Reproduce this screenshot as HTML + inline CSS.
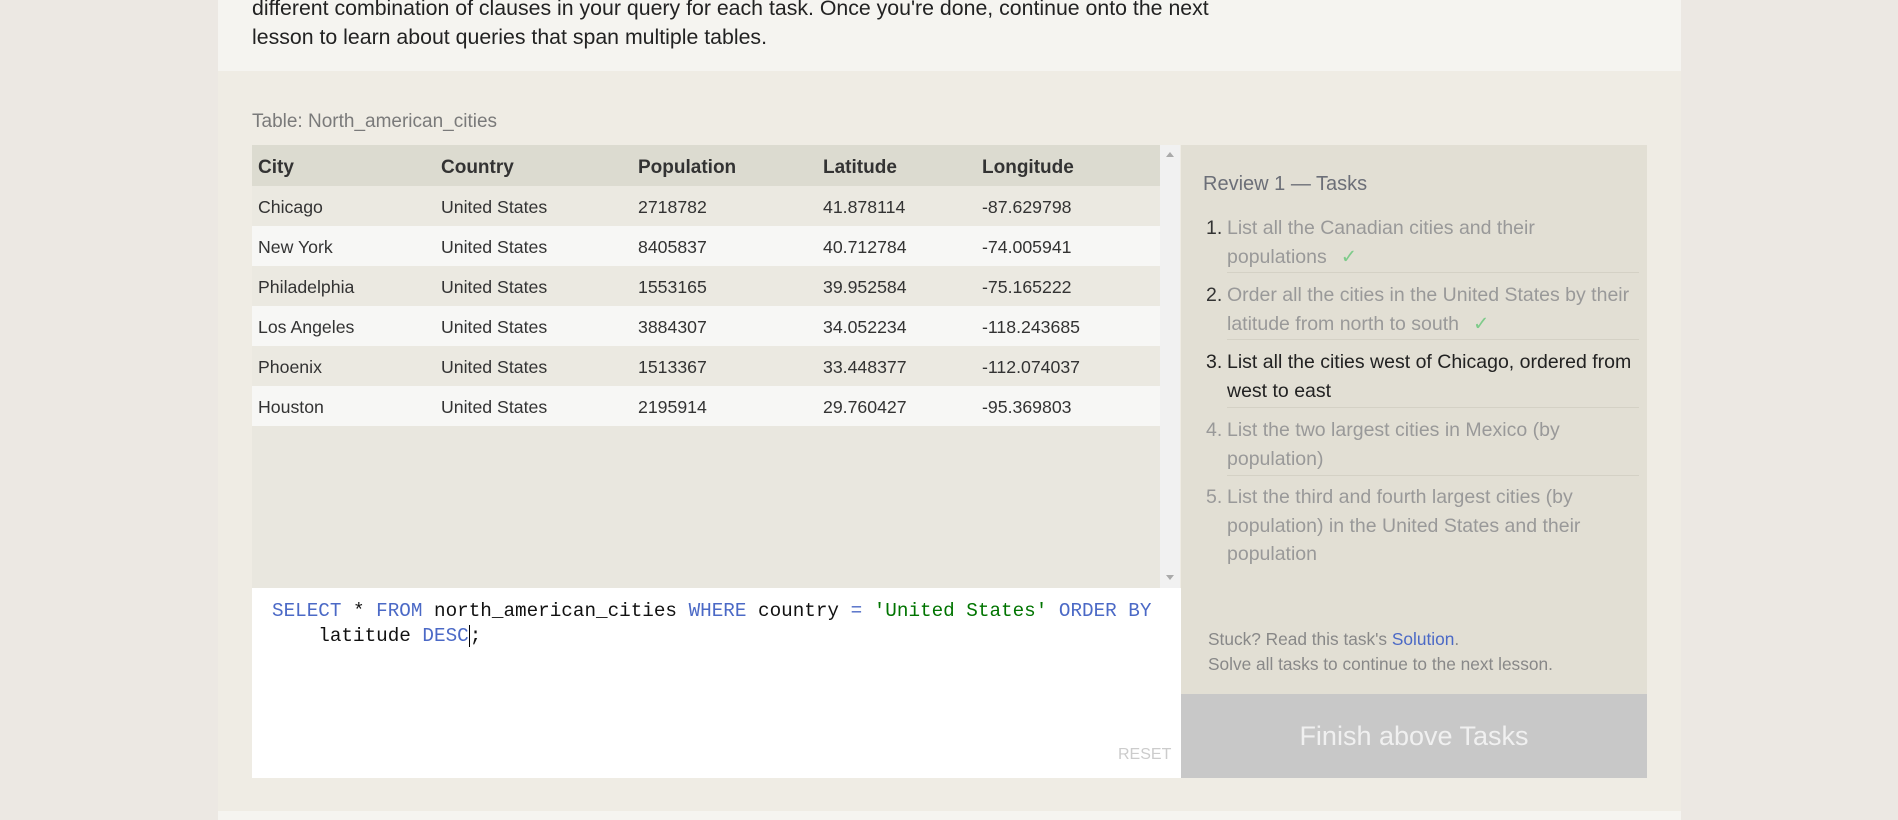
<!DOCTYPE html>
<html><head><meta charset="utf-8"><style>
*{margin:0;padding:0;box-sizing:border-box}
body{width:1898px;height:820px;overflow:hidden;background:#ece8e3;font-family:"Liberation Sans",sans-serif;position:relative}
.abs{position:absolute}
#top{left:218px;top:0;width:1463px;height:71px;background:#f5f4f0}
#top p{position:absolute;left:34px;font-size:21.3px;color:#222;white-space:nowrap}
#sec{left:218px;top:71px;width:1463px;height:740px;background:#efece4}
#bot{left:218px;top:811px;width:1463px;height:9px;background:#f5f4f0}
#cap{left:252px;top:111px;font-size:19px;color:#7a7a7a}
#tbl{left:252px;top:145px;width:908px;height:443px;background:#e9e7df}
.row{position:absolute;left:0;width:908px;height:40px;font-size:17.7px;color:#333}
.row span{position:absolute;top:11px}
.hd{background:#dcdbd0;height:41px;font-weight:bold;font-size:19px}
.hd span{top:12px}
.o{background:#ebe9e1}.e{background:#f7f7f5}
.c1{left:6px}.c2{left:189px}.c3{left:386px}.c4{left:571px}.c5{left:730px}
#sb{left:1160px;top:145px;width:20px;height:443px;background:#f1f1f1}
#ed{left:252px;top:588px;width:929px;height:190px;background:#fff;font-family:"Liberation Mono",monospace;font-size:19.3px;color:#111}
#ed div{position:absolute;white-space:pre;left:20px}
.k{color:#4b69c6}.s{color:#007400}
#rp{left:1181px;top:145px;width:466px;height:549px;background:#e2dfd4}
#btn{left:1181px;top:694px;width:466px;height:84px;background:#c8c8c8;color:#f0f0f0;font-size:27px;text-align:center;line-height:84px}
.t{position:absolute;left:46px;width:414px;font-size:19.5px;line-height:28.5px;color:#999}
.n{position:absolute;left:-21px}
.sep{position:absolute;left:46px;width:412px;height:1px;background:#d4d1c5}
.ck{color:#7ecb8a;margin-left:14px}
</style></head><body>
<div id="top" class="abs">
<p style="top:-4px">different combination of clauses in your query for each task. Once you're done, continue onto the next</p>
<p style="top:25px">lesson to learn about queries that span multiple tables.</p>
</div>
<div id="sec" class="abs"></div>
<div id="bot" class="abs"></div>
<div id="cap" class="abs">Table: North_american_cities</div>
<div id="tbl" class="abs">
<div class="row hd" style="top:0"><span class="c1">City</span><span class="c2">Country</span><span class="c3">Population</span><span class="c4">Latitude</span><span class="c5">Longitude</span></div>
<div class="row o" style="top:41px"><span class="c1">Chicago</span><span class="c2">United States</span><span class="c3">2718782</span><span class="c4">41.878114</span><span class="c5">-87.629798</span></div>
<div class="row e" style="top:81px"><span class="c1">New York</span><span class="c2">United States</span><span class="c3">8405837</span><span class="c4">40.712784</span><span class="c5">-74.005941</span></div>
<div class="row o" style="top:121px"><span class="c1">Philadelphia</span><span class="c2">United States</span><span class="c3">1553165</span><span class="c4">39.952584</span><span class="c5">-75.165222</span></div>
<div class="row e" style="top:161px"><span class="c1">Los Angeles</span><span class="c2">United States</span><span class="c3">3884307</span><span class="c4">34.052234</span><span class="c5">-118.243685</span></div>
<div class="row o" style="top:201px"><span class="c1">Phoenix</span><span class="c2">United States</span><span class="c3">1513367</span><span class="c4">33.448377</span><span class="c5">-112.074037</span></div>
<div class="row e" style="top:241px"><span class="c1">Houston</span><span class="c2">United States</span><span class="c3">2195914</span><span class="c4">29.760427</span><span class="c5">-95.369803</span></div>
</div>
<div id="sb" class="abs">
<svg width="20" height="443" style="position:absolute;left:0;top:0"><path d="M6 12 L10 7 L14 12Z" fill="#aaa"/><path d="M6 430 L10 435 L14 430Z" fill="#aaa"/></svg>
</div>
<div id="ed" class="abs">
<div style="top:12px"><span class="k">SELECT</span> * <span class="k">FROM</span> north_american_cities <span class="k">WHERE</span> country <span class="k">=</span> <span class="s">'United States'</span> <span class="k">ORDER BY</span></div>
<div style="top:37px">    latitude <span class="k">DESC</span><span style="border-left:1.5px solid #000">;</span></div>
<span style="position:absolute;left:866px;top:158px;font-family:'Liberation Sans',sans-serif;font-size:16px;color:#ccc">RESET</span>
</div>
<div id="rp" class="abs">
<div class="abs" style="left:22px;top:28px;font-size:20px;color:#6c6f78">Review 1 — Tasks</div>
<div class="t" style="top:69px"><span class="n" style="color:#333">1.</span>List all the Canadian cities and their populations<span class="ck">✓</span></div>
<div class="sep" style="top:127px"></div>
<div class="t" style="top:136px"><span class="n" style="color:#333">2.</span>Order all the cities in the United States by their latitude from north to south<span class="ck">✓</span></div>
<div class="sep" style="top:194px"></div>
<div class="t" style="top:203px;color:#222"><span class="n">3.</span>List all the cities west of Chicago, ordered from west to east</div>
<div class="sep" style="top:262px"></div>
<div class="t" style="top:271px"><span class="n">4.</span>List the two largest cities in Mexico (by population)</div>
<div class="sep" style="top:330px"></div>
<div class="t" style="top:338px"><span class="n">5.</span>List the third and fourth largest cities (by population) in the United States and their population</div>
<div class="abs" style="left:27px;top:482px;font-size:17.3px;color:#888;line-height:25px">Stuck? Read this task's <span style="color:#4b69c6">Solution</span>.<br>Solve all tasks to continue to the next lesson.</div>
</div>
<div id="btn" class="abs">Finish above Tasks</div>
</body></html>
